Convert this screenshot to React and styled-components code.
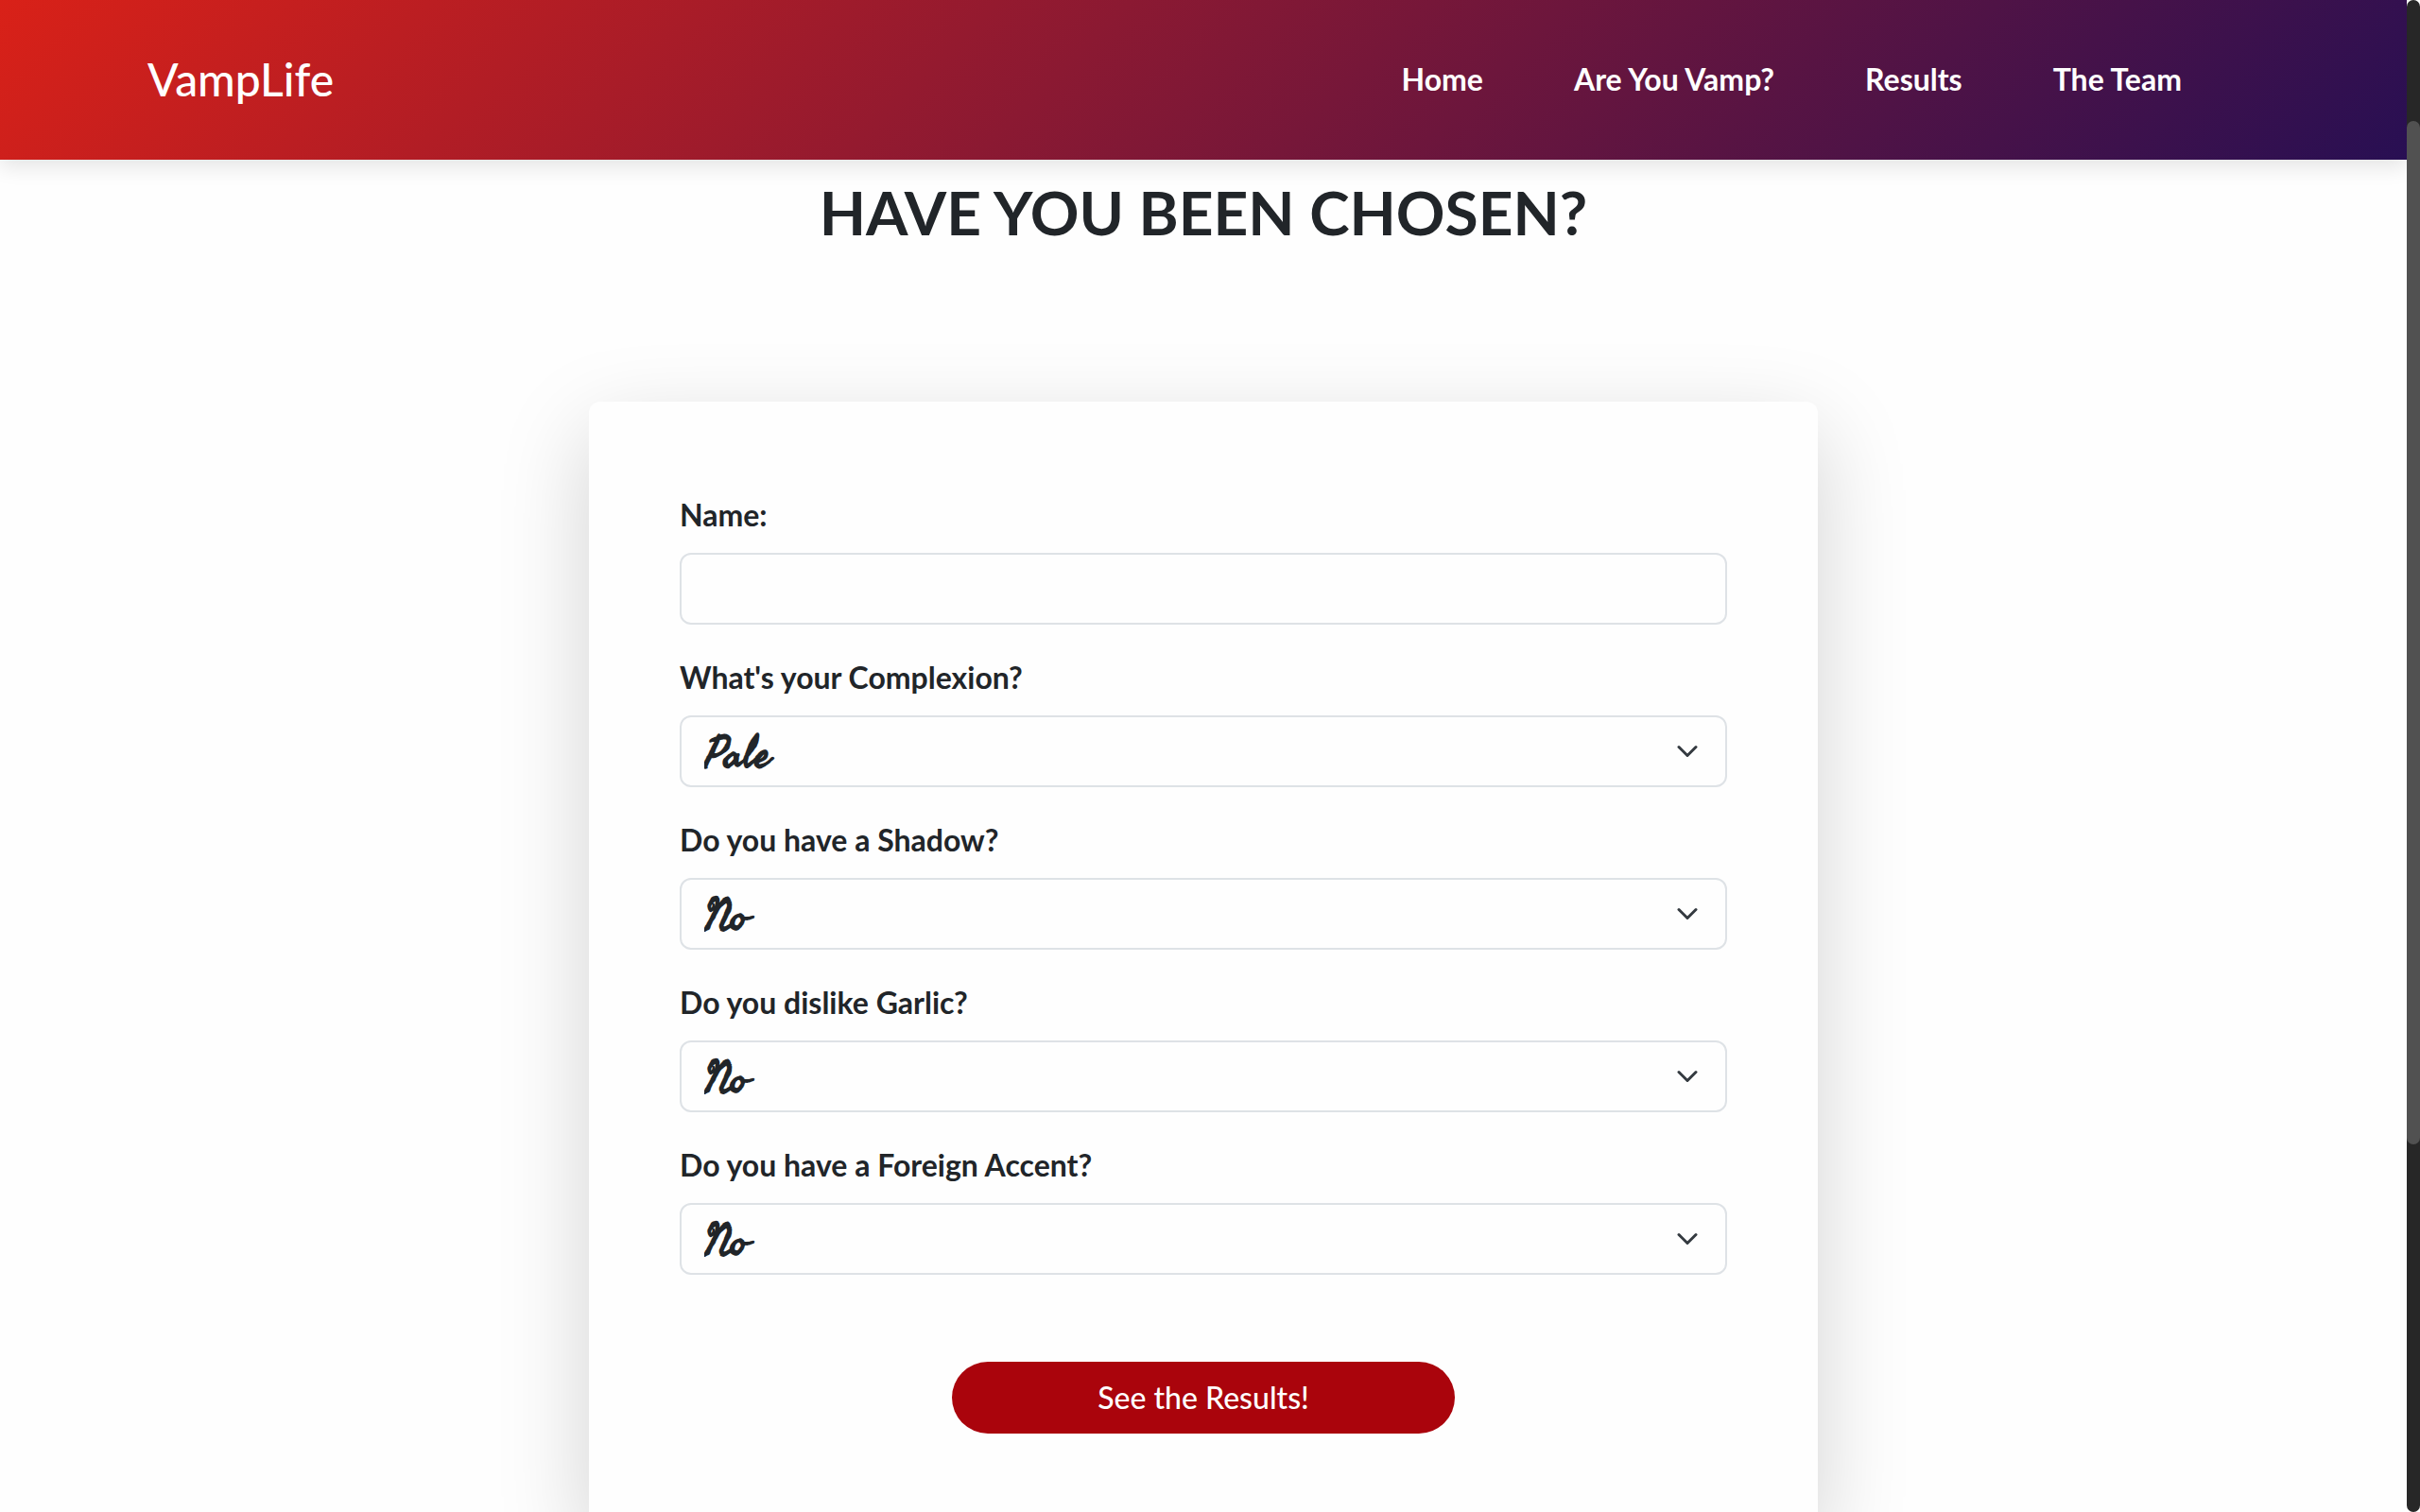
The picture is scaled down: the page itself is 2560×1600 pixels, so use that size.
import React from "react";
import styled, { createGlobalStyle } from "styled-components";

const GlobalStyle = createGlobalStyle`
  *, *::before, *::after { box-sizing: border-box; }
  body {
    margin: 0;
    background: #fefefe;
    color: #212529;
    font-family: Lato, "Open Sans", sans-serif;
    font-size: 32px;
    line-height: 48px;
  }
`;

const Shell = styled.div`
  display: grid;
  grid-template-columns: minmax(0, 1fr) 14px;
  height: 100vh;
  overflow: hidden;
`;

const Page = styled.div`
  overflow: hidden;
`;

const Header = styled.header`
  display: flex;
  align-items: center;
  justify-content: space-between;
  padding: 48px 238px 49px 156px;
  background: linear-gradient(135deg, #d92118, #280f53);
  box-shadow: 0 8px 20px rgba(0, 0, 0, 0.1);
`;

const Brand = styled.a`
  color: #fff;
  font-size: 48px;
  font-weight: 500;
  line-height: 72px;
  text-decoration: none;
`;

const Nav = styled.nav`
  display: flex;
  gap: 96px;
`;

const NavLink = styled.a`
  color: #fff;
  font-weight: 700;
  text-decoration: none;
`;

const Main = styled.main`
  display: flex;
  flex-direction: column;
  align-items: center;
  padding-top: 16px;
`;

const Title = styled.h1`
  margin: 0 0 160px;
  font-size: 64px;
  line-height: 80px;
  font-weight: 700;
  text-transform: uppercase;
`;

const Card = styled.form`
  display: flex;
  flex-direction: column;
  gap: 32px;
  width: 100%;
  max-width: 1300px;
  padding: 96px;
  background: #fefefe;
  border-radius: 12px;
  box-shadow: 0 32px 96px rgba(0, 0, 0, 0.175);
`;

const Field = styled.div`
  display: flex;
  flex-direction: column;
  gap: 16px;
`;

const Label = styled.label`
  font-weight: 700;
`;

const Control = styled.input`
  display: block;
  width: 100%;
  height: 76px;
  padding: 16px 24px 8px;
  border: 2px solid #dee2e6;
  border-radius: 12px;
  background: #fefefe;
  color: #212529;
  font-family: "Homemade Apple", "Seaweed Script", "Liberation Serif", serif;
  font-size: 48px;
  font-weight: 700;
  line-height: 48px;
  appearance: none;
`;

const SelectWrap = styled.div`
  position: relative;
`;

const Chevron = styled.svg`
  position: absolute;
  top: 26px;
  right: 30px;
  width: 24px;
  height: 24px;
  fill: none;
  stroke: #343a40;
  stroke-width: 2;
  stroke-linecap: round;
  stroke-linejoin: round;
  pointer-events: none;
`;

const Submit = styled.button`
  align-self: center;
  width: 48%;
  height: 76px;
  margin-top: 60px;
  border: 0;
  border-radius: 38px;
  background: #aa040c;
  color: #fff;
  font: inherit;
  font-weight: 500;
`;

const Rail = styled.div`
  height: 100%;
  border-radius: 7px;
  background: #272727;
`;

const Thumb = styled.div`
  position: relative;
  top: 8%;
  height: 67.7%;
  border-radius: 7px;
  background: #515151;
`;

const links = ["Home", "Are You Vamp?", "Results", "The Team"];

const questions = [
  { id: "complexion", label: "What's your Complexion?", options: ["Pale", "Tan", "Dark"] },
  { id: "shadow", label: "Do you have a Shadow?", options: ["No", "Yes"] },
  { id: "garlic", label: "Do you dislike Garlic?", options: ["No", "Yes"] },
  { id: "accent", label: "Do you have a Foreign Accent?", options: ["No", "Yes"] },
];

function SelectField({ id, label, options }) {
  return (
    <Field>
      <Label htmlFor={id}>{label}</Label>
      <SelectWrap>
        <Control as="select" id={id} defaultValue={options[0]}>
          {options.map((option) => (
            <option key={option}>{option}</option>
          ))}
        </Control>
        <Chevron viewBox="0 0 16 16" aria-hidden="true">
          <path d="m2 5 6 6 6-6" />
        </Chevron>
      </SelectWrap>
    </Field>
  );
}

export default function App() {
  return (
    <>
      <GlobalStyle />
      <Shell>
        <Page>
          <Header>
            <Brand href="#">VampLife</Brand>
            <Nav>
              {links.map((link) => (
                <NavLink key={link} href="#">
                  {link}
                </NavLink>
              ))}
            </Nav>
          </Header>
          <Main>
            <Title>Have you been chosen?</Title>
            <Card onSubmit={(event) => event.preventDefault()}>
              <Field>
                <Label htmlFor="name">Name:</Label>
                <Control id="name" type="text" />
              </Field>
              {questions.map((question) => (
                <SelectField key={question.id} {...question} />
              ))}
              <Submit type="submit">See the Results!</Submit>
            </Card>
          </Main>
        </Page>
        <Rail aria-hidden="true">
          <Thumb />
        </Rail>
      </Shell>
    </>
  );
}
